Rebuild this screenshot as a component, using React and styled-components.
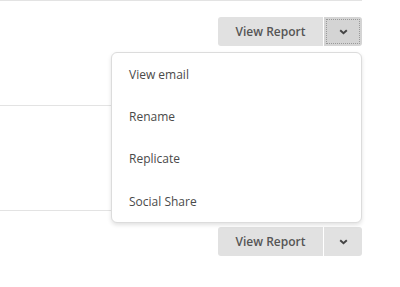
import React from "react";
import styled, { createGlobalStyle } from "styled-components";

const Global = createGlobalStyle`
  html, body { margin: 0; padding: 0; background: #fff; }
  body { font-family: "Open Sans", "Liberation Sans", sans-serif; }
`;

const Page = styled.div`
  width: 400px;
  height: 287px;
  overflow: hidden;
  padding-right: 38px;
  box-sizing: border-box;
`;

const Row = styled.div`
  position: relative;
  height: 105px;
  border-top: 1px solid #e3e3e3;
  box-sizing: border-box;
  display: flex;
  justify-content: flex-end;
  align-items: flex-start;
  padding-top: 16px;
`;

const SplitButton = styled.div`
  display: flex;
  gap: 1px;
`;

const MainButton = styled.button`
  width: 105px;
  height: 29px;
  border: none;
  background: #e1e1e1;
  color: #555;
  font-family: "Open Sans", sans-serif;
  font-weight: 600;
  font-size: 12px;
  border-radius: 3px 0 0 3px;
  padding: 0;
  display: flex;
  align-items: center;
  justify-content: center;
`;

const CaretButton = styled.button`
  width: 38px;
  height: 29px;
  border: none;
  background: ${(p) => (p.$active ? "#d4d4d4" : "#e1e1e1")};
  border-radius: 0 3px 3px 0;
  padding: 0;
  display: flex;
  align-items: center;
  justify-content: center;
  color: #555;
  outline: ${(p) => (p.$active ? "1px dotted #999" : "none")};
  outline-offset: -3px;
`;

const Menu = styled.ul`
  position: absolute;
  top: 51px;
  right: 0;
  width: 251px;
  margin: 0;
  padding: 0;
  list-style: none;
  background: #fff;
  border: 1px solid #dcdcdc;
  border-radius: 6px;
  box-shadow: 0 2px 4px rgba(0, 0, 0, 0.12);
  z-index: 10;
  box-sizing: border-box;
`;

const MenuItem = styled.li`
  height: 42.3px;
  display: flex;
  align-items: center;
  padding-left: 17px;
  font-size: 12px;
  font-weight: 500;
  color: #4a4a4a;
`;

const Chevron = () => (
  <svg width="9" height="6" viewBox="0 0 9 6">
    <polyline points="1.2,1.2 4.5,4.3 7.8,1.2" fill="none" stroke="#444" strokeWidth="1.9" />
  </svg>
);

const Actions = ({ active }) => (
  <SplitButton>
    <MainButton>View Report</MainButton>
    <CaretButton $active={active}>
      <Chevron />
    </CaretButton>
  </SplitButton>
);

export default function App() {
  return (
    <>
      <Global />
      <Page>
        <Row>
          <Actions active />
          <Menu>
            <MenuItem>View email</MenuItem>
            <MenuItem>Rename</MenuItem>
            <MenuItem>Replicate</MenuItem>
            <MenuItem>Social Share</MenuItem>
          </Menu>
        </Row>
        <Row>
          <Actions />
        </Row>
        <Row>
          <Actions />
        </Row>
      </Page>
    </>
  );
}
